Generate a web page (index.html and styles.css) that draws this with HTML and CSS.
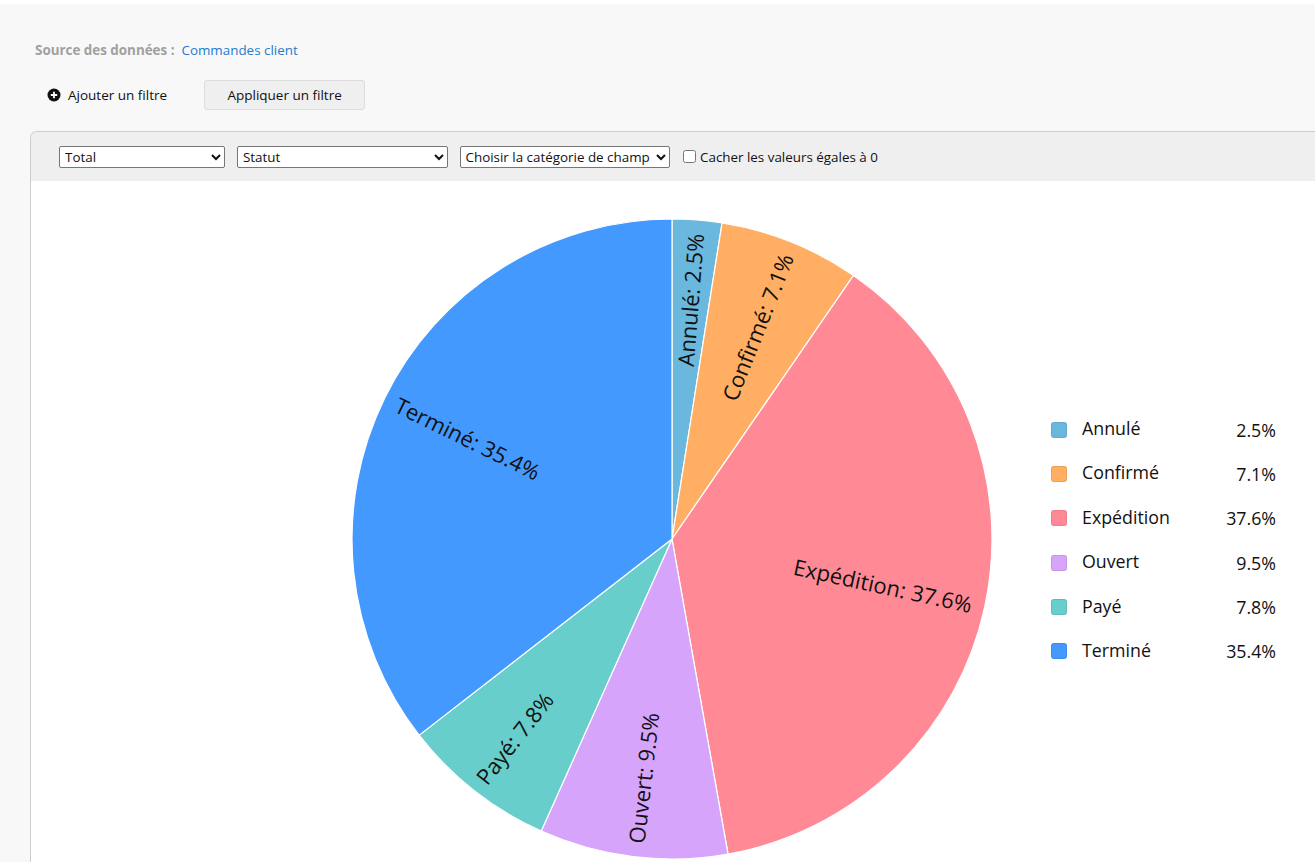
FILE: index.html
```html
<!DOCTYPE html>
<html lang="fr">
<head>
<meta charset="utf-8">
<title>Rapport</title>
<link rel="stylesheet" href="styles.css">
</head>
<body>
<div class="topstrip"></div>
<main class="page">
  <div class="source">
    <span class="source-label">Source des données :</span>
    <a class="source-link" href="#">Commandes client</a>
  </div>
  <div class="filters">
    <span class="add-filter">
      <svg class="add-icon" width="14" height="14" viewBox="0 0 14 14"><circle cx="7" cy="7" r="6.5" fill="#111"/><path d="M7 3.8v6.4M3.8 7h6.4" stroke="#fff" stroke-width="1.8"/></svg>
      Ajouter un filtre
    </span>
    <button class="apply-btn">Appliquer un filtre</button>
  </div>
  <section class="panel">
    <div class="panel-head">
      <select class="sel sel-total"><option>Total</option></select>
      <select class="sel sel-wide"><option>Statut</option></select>
      <select class="sel sel-wide"><option>Choisir la catégorie de champ</option></select>
      <label class="hide-zero"><input type="checkbox" class="chk">Cacher les valeurs égales à 0</label>
    </div>
    <div class="chart">
      <svg class="pie" width="1000" height="716" viewBox="31 181 1000 716">
        <g stroke="#fff" stroke-width="1.2">
          <path fill="#6bb8df" d="M672,539 L672,219 A320,320 0 0 1 722.06,222.94 Z"/>
          <path fill="#ffae63" d="M672,539 L722.06,222.94 A320,320 0 0 1 853.51,275.46 Z"/>
          <path fill="#ff8a96" d="M672,539 L853.51,275.46 A320,320 0 0 1 728.01,854.06 Z"/>
          <path fill="#d7a4fc" d="M672,539 L728.01,854.06 A320,320 0 0 1 541.24,831.06 Z"/>
          <path fill="#67cecb" d="M672,539 L541.24,831.06 A320,320 0 0 1 419.15,735.13 Z"/>
          <path fill="#4499ff" d="M672,539 L419.15,735.13 A320,320 0 0 1 672,219 Z"/>
        </g>
        <g class="slice-labels">
          <text transform="translate(690,300) rotate(-85.5)">Annulé: 2.5%</text>
          <text transform="translate(757,327) rotate(-68.2)">Confirmé: 7.1%</text>
          <text transform="translate(883,585) rotate(12.2)">Expédition: 37.6%</text>
          <text transform="translate(643,778) rotate(-83.5)">Ouvert: 9.5%</text>
          <text transform="translate(514,738) rotate(-51.8)">Payé: 7.8%</text>
          <text transform="translate(468,438) rotate(26.05)">Terminé: 35.4%</text>
        </g>
      </svg>
      <ul class="legend">
        <li class="legend-row"><span class="swatch sw-annule"></span><span class="legend-name">Annulé</span><span class="legend-pct">2.5%</span></li>
        <li class="legend-row"><span class="swatch sw-confirme"></span><span class="legend-name">Confirmé</span><span class="legend-pct">7.1%</span></li>
        <li class="legend-row"><span class="swatch sw-expedition"></span><span class="legend-name">Expédition</span><span class="legend-pct">37.6%</span></li>
        <li class="legend-row"><span class="swatch sw-ouvert"></span><span class="legend-name">Ouvert</span><span class="legend-pct">9.5%</span></li>
        <li class="legend-row"><span class="swatch sw-paye"></span><span class="legend-name">Payé</span><span class="legend-pct">7.8%</span></li>
        <li class="legend-row"><span class="swatch sw-termine"></span><span class="legend-name">Terminé</span><span class="legend-pct">35.4%</span></li>
      </ul>
    </div>
  </section>
</main>
</body>
</html>
```

FILE: styles.css
```css
html, body {
  margin: 0;
  padding: 0;
  height: 100%;
  overflow: hidden;
  background: #f8f8f8;
  font-family: "Open Sans", "Noto Sans", sans-serif;
  color: #222;
}

.topstrip {
  height: 4px;
  background: #ffffff;
}

.page {
  background: #f8f8f8;
}

.source {
  margin: 37px 0 0 35px;
  height: 18px;
  line-height: 18px;
  font-size: 13.4px;
  display: flex;
  gap: 7px;
}

.source-label {
  font-weight: 700;
  color: #a0a0a0;
}

.source-link {
  color: #1b7cd1;
  text-decoration: none;
}

.filters {
  margin: 21px 0 0 47px;
  height: 29px;
  display: flex;
  align-items: center;
  font-size: 13.5px;
}

.add-filter {
  display: flex;
  align-items: center;
  gap: 7px;
  color: #111;
}

.add-icon {
  display: block;
}

.apply-btn {
  margin-left: 37px;
  width: 161px;
  height: 30px;
  background: #efefef;
  border: 1px solid #dcdcdc;
  border-radius: 3px;
  font-family: inherit;
  font-size: 13.5px;
  color: #111;
  padding: 0;
}

.panel {
  margin: 22px 0 0 30px;
  border-top: 1px solid #cccccc;
  border-left: 1px solid #cccccc;
  border-top-left-radius: 7px;
  overflow: hidden;
}

.panel-head {
  height: 49px;
  background: #efefef;
  display: flex;
  align-items: center;
  padding-left: 28px;
  box-sizing: border-box;
}

.sel {
  height: 22px;
  font-family: inherit;
  font-size: 13.4px;
  color: #111;
  background: #fff;
  border: 1px solid #767676;
  border-radius: 2px;
  padding: 0 1px;
  margin: 0 12px 0 0;
}

.sel-total { width: 166px; }
.sel-wide { width: 210.5px; }

.hide-zero {
  display: flex;
  align-items: center;
  font-size: 13.4px;
  color: #111;
  margin-left: 1px;
}

.chk {
  width: 13px;
  height: 13px;
  margin: 0 4px 0 0;
}

.chart {
  height: 716px;
  background: #ffffff;
  display: flex;
  align-items: center;
}

.pie {
  display: block;
  flex: none;
}

.slice-labels text {
  font-family: "Open Sans", "Noto Sans", sans-serif;
  font-size: 22px;
  fill: #111;
  text-anchor: middle;
  dominant-baseline: central;
}

.legend {
  list-style: none;
  margin: 0 0 0 20px;
  padding: 3px 0 0 0;
  width: 225px;
  font-size: 17.8px;
  color: #111;
}

.legend-row {
  height: 44.4px;
  display: flex;
  align-items: center;
}

.swatch {
  width: 16px;
  height: 16px;
  border-radius: 3px;
  box-sizing: border-box;
  border: 1px solid rgba(0, 0, 0, 0.08);
  margin-right: 15px;
  flex: none;
}

.legend-name {
  flex: 1;
  margin-top: -3px;
}

.legend-pct {
  text-align: right;
}

.sw-annule { background: #6bb8df; }
.sw-confirme { background: #ffae63; }
.sw-expedition { background: #ff8a96; }
.sw-ouvert { background: #d7a4fc; }
.sw-paye { background: #67cecb; }
.sw-termine { background: #4499ff; }
```
